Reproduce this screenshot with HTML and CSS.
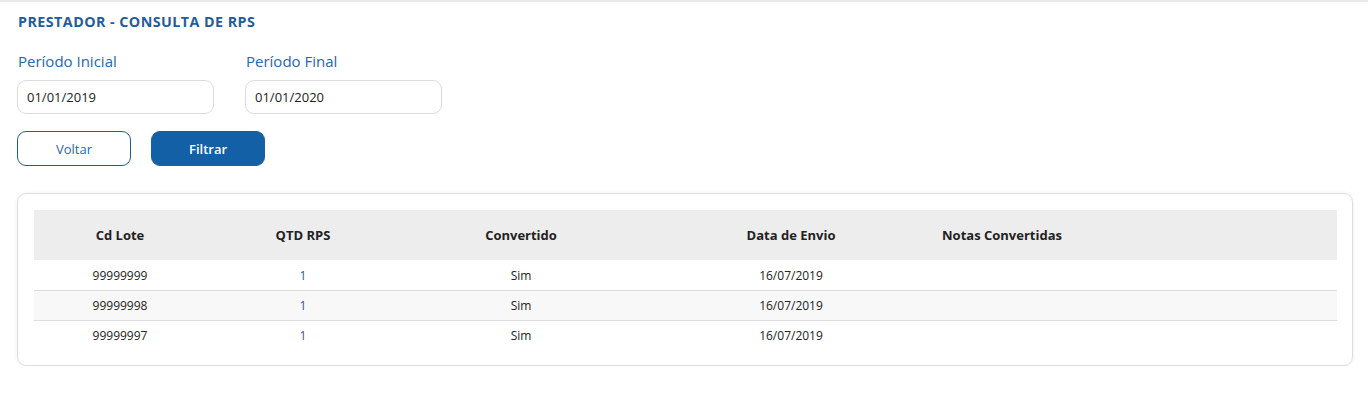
FILE: index.html
```html
<!DOCTYPE html>
<html lang="pt">
<head>
<meta charset="utf-8">
<title>Prestador - Consulta de RPS</title>
<link rel="stylesheet" href="styles.css">
</head>
<body>
<div class="page">
  <h1 class="title">PRESTADOR - CONSULTA DE RPS</h1>
  <div class="filters">
    <div class="field">
      <label class="label">Período Inicial</label>
      <div class="input">01/01/2019</div>
    </div>
    <div class="field">
      <label class="label">Período Final</label>
      <div class="input">01/01/2020</div>
    </div>
  </div>
  <div class="actions">
    <button class="btn btn-outline">Voltar</button>
    <button class="btn btn-primary">Filtrar</button>
  </div>
  <div class="card">
    <table class="grid">
      <colgroup>
        <col class="c1"><col class="c2"><col class="c3"><col class="c4"><col class="c5"><col>
      </colgroup>
      <thead>
        <tr><th>Cd Lote</th><th>QTD RPS</th><th>Convertido</th><th>Data de Envio</th><th>Notas Convertidas</th><th></th></tr>
      </thead>
      <tbody>
        <tr><td>99999999</td><td class="link">1</td><td>Sim</td><td>16/07/2019</td><td></td><td></td></tr>
        <tr class="alt"><td>99999998</td><td class="link">1</td><td>Sim</td><td>16/07/2019</td><td></td><td></td></tr>
        <tr><td>99999997</td><td class="link">1</td><td>Sim</td><td>16/07/2019</td><td></td><td></td></tr>
      </tbody>
    </table>
  </div>
</div>
</body>
</html>
```

FILE: styles.css
```css
* { box-sizing: border-box; }
html, body { margin: 0; padding: 0; background: #fff; }
body { font-family: "Open Sans", "Noto Sans", sans-serif; color: #222; }
.page {
  width: 1368px;
  border-top: 2px solid #e8e8e8;
  padding: 10px 15px 0 17px;
}
.title {
  margin: 0 0 0 1px;
  font-size: 14.3px;
  font-weight: 700;
  color: #1f5d9c;
  line-height: 20px;
  letter-spacing: 0.45px;
}
.filters {
  display: flex;
  gap: 31px;
  margin-top: 19px;
}
.field { display: flex; flex-direction: column; }
.label {
  font-size: 15px;
  color: #2667ad;
  line-height: 20px;
  margin-left: 1px;
}
.input {
  margin-top: 9px;
  width: 197px;
  height: 34px;
  border: 1px solid #dcdcdc;
  border-radius: 9px;
  padding: 0 9px;
  font-size: 13px;
  line-height: 32px;
  color: #222;
}
.actions {
  display: flex;
  gap: 20px;
  margin-top: 17px;
}
.btn {
  width: 114px;
  height: 35px;
  border-radius: 9px;
  font-family: inherit;
  font-size: 13px;
  cursor: pointer;
}
.btn-outline {
  background: #fff;
  border: 1px solid #1f5d9c;
  color: #2667ad;
}
.btn-primary {
  background: #1460a6;
  border: 1px solid #1460a6;
  color: #fff;
  font-weight: 600;
}
.card {
  margin-top: 27px;
  width: 1336px;
  border: 1px solid #dedede;
  border-radius: 9px;
  box-shadow: 0 0 4px rgba(0,0,0,0.06);
  padding: 16px 15px 15px 16px;
}
.grid {
  width: 1303px;
  border-collapse: collapse;
  table-layout: fixed;
}
.c1 { width: 172px; }
.c2 { width: 194px; }
.c3 { width: 242px; }
.c4 { width: 298px; }
.c5 { width: 124px; }
.grid th {
  background: #ededed;
  height: 50px;
  font-size: 13px;
  font-weight: 700;
  color: #222;
  text-align: center;
  padding: 0;
  white-space: nowrap;
}
.grid td {
  height: 30px;
  font-size: 12px;
  text-align: center;
  padding: 1px 0 0;
  color: #222;
  border-top: 1px solid #dcdcdc;
}
.grid tbody tr:first-child td { border-top-color: transparent; }
.grid tr.alt td { background: #f8f8f8; }
.grid td.link { color: #1f5d9c; }
```
